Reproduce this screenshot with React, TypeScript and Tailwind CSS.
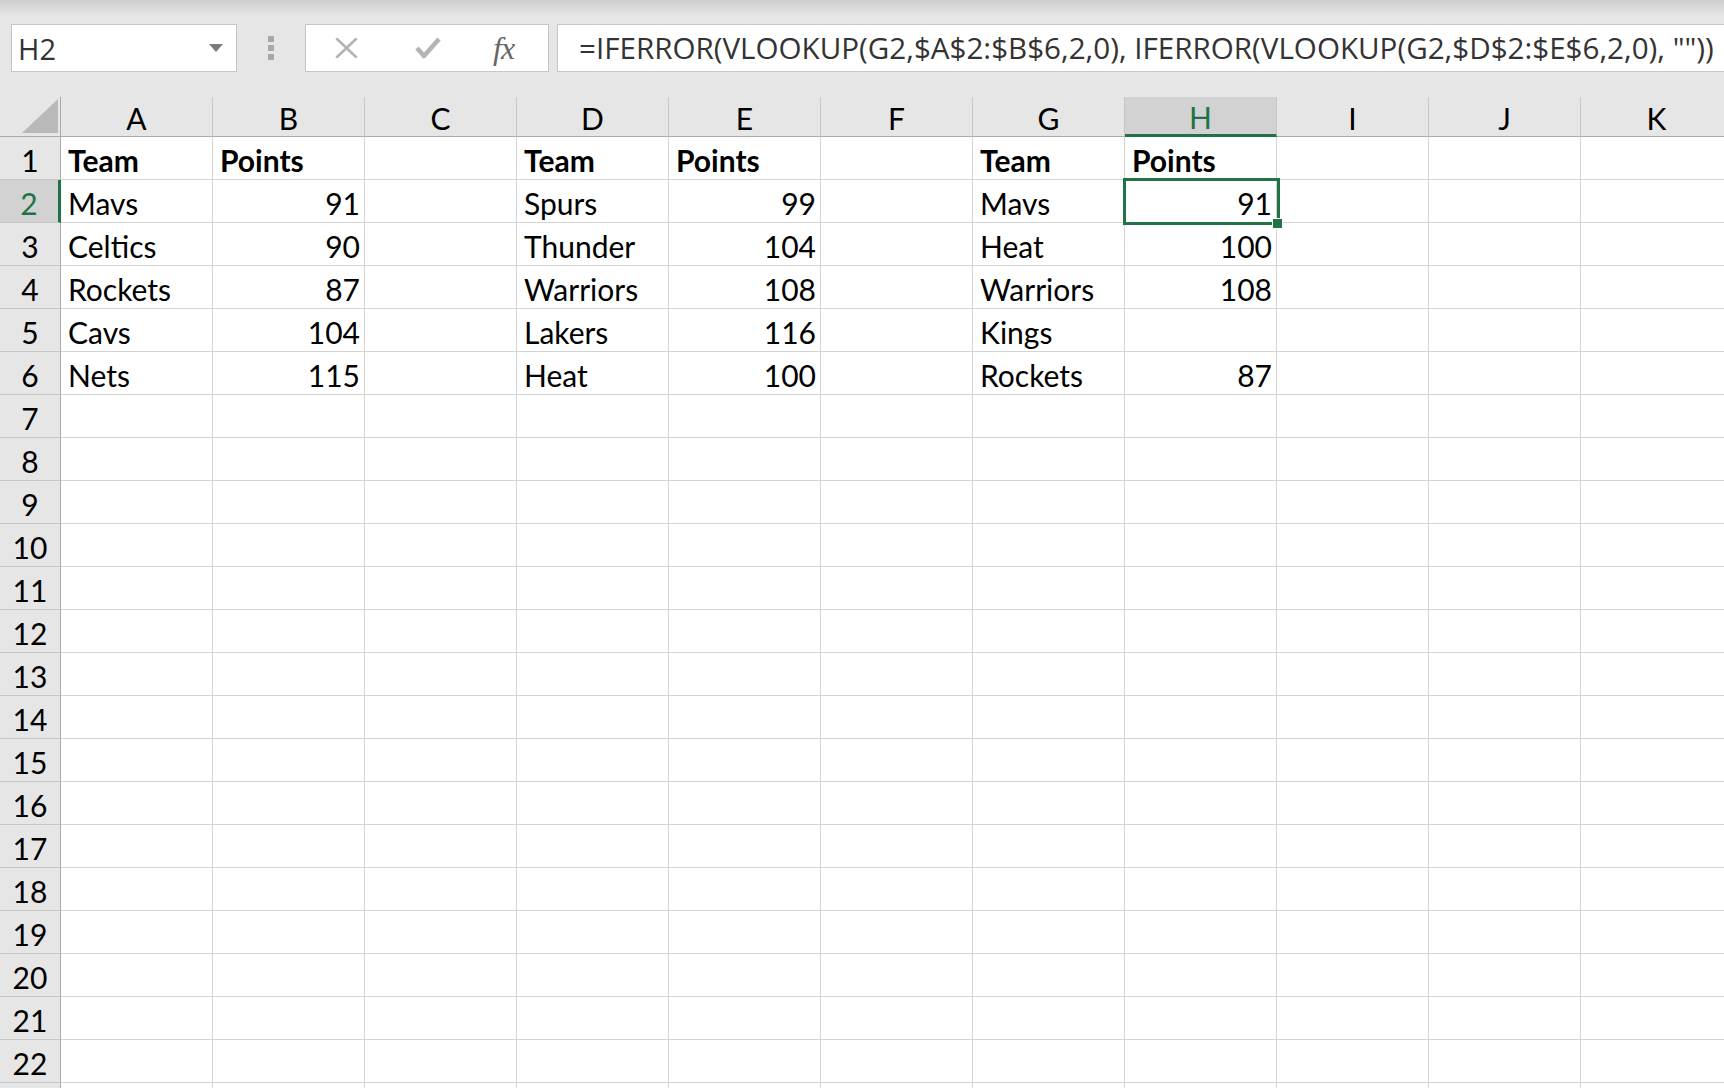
import React from 'react';

const COLS = ['A', 'B', 'C', 'D', 'E', 'F', 'G', 'H', 'I', 'J', 'K'];
const ROW_COUNT = 23;

type Cell = { v: string; bold?: boolean; num?: boolean };

// sheet contents, keyed by "col+row"
const data: Record<string, Cell> = {
  A1: { v: 'Team', bold: true },
  B1: { v: 'Points', bold: true },
  D1: { v: 'Team', bold: true },
  E1: { v: 'Points', bold: true },
  G1: { v: 'Team', bold: true },
  H1: { v: 'Points', bold: true },
};

const put = (col: string, start: number, values: (string | number)[]) => {
  values.forEach((v, i) => {
    if (v === '') return;
    data[`${col}${start + i}`] = { v: String(v), num: typeof v === 'number' };
  });
};

put('A', 2, ['Mavs', 'Celtics', 'Rockets', 'Cavs', 'Nets']);
put('B', 2, [91, 90, 87, 104, 115]);
put('D', 2, ['Spurs', 'Thunder', 'Warriors', 'Lakers', 'Heat']);
put('E', 2, [99, 104, 108, 116, 100]);
put('G', 2, ['Mavs', 'Heat', 'Warriors', 'Kings', 'Rockets']);
put('H', 2, [91, 100, 108, '', 87]);

const FORMULA = '=IFERROR(VLOOKUP(G2,$A$2:$B$6,2,0), IFERROR(VLOOKUP(G2,$D$2:$E$6,2,0), ""))';

const FormulaBar: React.FC = () => (
  <div className="flex items-center h-[48px] mt-[8px] font-['Open_Sans',sans-serif] text-[#333]">
    <div className="ml-[11px] w-[226px] h-[48px] bg-white border border-[#c6c6c6] flex items-center pl-[6px] pr-[13px] shrink-0">
      <span className="text-[29px] leading-none flex-1">H2</span>
      <svg width="14" height="9" viewBox="0 0 14 9">
        <path d="M0 0 L14 0 L7 8 Z" fill="#7a7a7a" />
      </svg>
    </div>

    <div className="w-[68px] flex flex-col items-center gap-[3px] shrink-0">
      <span className="w-[6px] h-[6px] bg-[#a8a8a8]" />
      <span className="w-[6px] h-[6px] bg-[#a8a8a8]" />
      <span className="w-[6px] h-[6px] bg-[#a8a8a8]" />
    </div>

    <div className="w-[244px] h-[48px] bg-white border border-[#c6c6c6] flex items-center shrink-0">
      <svg className="ml-[29px]" width="23" height="20" viewBox="0 0 23 20">
        <path d="M2 1 L21 19 M21 1 L2 19" stroke="#b4b4b4" strokeWidth="2.6" strokeLinecap="round" />
      </svg>
      <svg className="ml-[57px]" width="26" height="22" viewBox="0 0 26 22">
        <path d="M2 11 L9 19 L24 2" stroke="#b4b4b4" strokeWidth="4.5" fill="none" strokeLinejoin="round" />
      </svg>
      <span className="ml-[52px] font-['Liberation_Serif',serif] italic text-[32px] leading-none text-[#666] tracking-[-1px]">
        fx
      </span>
    </div>

    <div className="ml-[8px] flex-1 h-[48px] bg-white border border-[#c6c6c6] border-r-0 flex items-center pl-[21px] overflow-hidden">
      <span className="text-[29.6px] leading-none whitespace-nowrap">{FORMULA}</span>
    </div>
  </div>
);

const Sheet: React.FC = () => {
  const rows = Array.from({ length: ROW_COUNT }, (_, i) => i + 1);

  return (
    <div className="relative mt-[25px] grid grid-cols-[61px_repeat(11,152px)] grid-rows-[40px_repeat(23,43px)] font-['Lato',sans-serif] text-[30px] text-black">
      {/* corner */}
      <div className="bg-[#e6e6e6] border-r border-b border-[#ababab] flex items-end justify-end pr-[2px] pb-[3px]">
        <svg width="36" height="34" viewBox="0 0 36 34">
          <path d="M36 0 L36 34 L0 34 Z" fill="#b9b9b9" />
        </svg>
      </div>
      {COLS.map(c => (
        <div
          key={c}
          className={`flex items-center justify-center leading-none pt-[2px] ${
            c === 'H'
              ? 'bg-[#d2d2d2] text-[#217346] border-r border-[#c6c6c6] border-b-[3px] border-b-[#217346]'
              : 'bg-[#e6e6e6] text-black border-r border-b border-r-[#c6c6c6] border-b-[#ababab]'
          }`}
        >
          {c}
        </div>
      ))}

      {rows.map(r => (
        <React.Fragment key={r}>
          <div
            className={`flex items-center justify-center leading-none pt-[4px] border-b ${
              r === 2
                ? 'bg-[#d2d2d2] text-[#217346] border-r-[3px] border-r-[#217346] border-b-[#c6c6c6]'
                : 'bg-[#e6e6e6] text-black border-r border-r-[#ababab] border-b-[#c6c6c6]'
            }`}
          >
            {r < ROW_COUNT ? r : ''}
          </div>
          {COLS.map(c => {
            const cell = data[`${c}${r}`];
            return (
              <div
                key={c}
                className={`bg-white border-r border-b border-[#d4d4d4] flex items-center pl-[7px] pr-[4px] pt-[4px] leading-none whitespace-nowrap ${
                  cell?.num ? 'justify-end' : 'justify-start'
                } ${cell?.bold ? 'font-bold' : ''}`}
              >
                {cell?.v}
              </div>
            );
          })}
        </React.Fragment>
      ))}

      {/* active cell H2 */}
      <div className="absolute left-[1123px] top-[81px] w-[157px] h-[47px] border-[3px] border-[#217346] pointer-events-none" />
      <div className="absolute left-[1272px] top-[121px] w-[11px] h-[11px] bg-[#217346] border border-white pointer-events-none" />
    </div>
  );
};

export default function App() {
  return (
    <div className="w-[1724px] h-[1088px] overflow-hidden bg-[#e6e6e6]">
      <div className="h-[16px] bg-gradient-to-b from-[#cdcdcd] to-[#e6e6e6]" />
      <FormulaBar />
      <Sheet />
    </div>
  );
}
